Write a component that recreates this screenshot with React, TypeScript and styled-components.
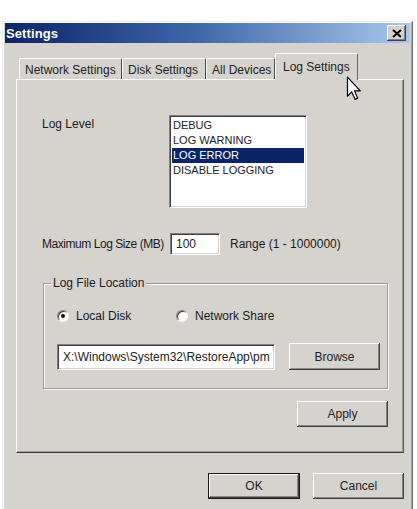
import styled, { createGlobalStyle } from 'styled-components';

const GlobalStyle = createGlobalStyle`
  html, body {
    margin: 0;
    padding: 0;
    background: #ffffff;
  }
  body {
    font-family: "Liberation Sans", Arial, sans-serif;
    font-size: 12px;
    color: #1a1a1a;
    overflow: hidden;
  }
`;

const Window = styled.div`
  position: relative;
  margin: 21px 0 0 2px;
  width: 411px;
  height: 500px;
  box-sizing: border-box;
  background: #d6d3ce;
  border-top: 1px solid #ecebe8;
  border-left: 1px solid #ecebe8;
  border-right: 1px solid #6e6c68;
  box-shadow: inset -1px 0 #a8a6a0, inset 1px 1px #ffffff;
  padding: 1px 2px 0 2px;
`;

const TitleBar = styled.div`
  height: 20px;
  display: flex;
  align-items: center;
  justify-content: space-between;
  padding: 0 4px 0 1px;
  background: linear-gradient(to right, #0b2468 0%, #3b64a6 45%, #a8c8ec 100%);
`;

const Title = styled.span`
  color: #ffffff;
  font-weight: bold;
  font-size: 13px;
  letter-spacing: 0.1px;
`;

const CloseButton = styled.button`
  width: 19px;
  height: 16px;
  padding: 0;
  display: flex;
  align-items: center;
  justify-content: center;
  background: #d6d3ce;
  border: none;
  box-shadow: inset -1px -1px #404040, inset 1px 1px #ffffff, inset -2px -2px #808080;
`;

const TabStrip = styled.div`
  display: flex;
  align-items: flex-end;
  margin-top: 10px;
  padding-left: 14px;
  height: 26px;
  position: relative;
  z-index: 1;
`;

const Tab = styled.div<{ $active?: boolean; $w: number }>`
  width: ${(p) => p.$w}px;
  height: ${(p) => (p.$active ? 27 : 21)}px;
  box-sizing: border-box;
  display: flex;
  align-items: ${(p) => (p.$active ? 'flex-start' : 'center')};
  padding: ${(p) => (p.$active ? '6px 0 0 7px' : '1px 0 0 5px')};
  margin: ${(p) => (p.$active ? '0 0 -1px 0' : '0')};
  background: #d6d3ce;
  border-top: 1px solid #ffffff;
  border-left: 1px solid #ffffff;
  border-right: 1px solid ${(p) => (p.$active ? '#6a6864' : '#4a4845')};
  border-radius: 2px 2px 0 0;
  font-size: 12px;
  color: #222;
  white-space: nowrap;
`;

const Panel = styled.div`
  margin-left: 11px;
  width: 388px;
  height: 374px;
  box-sizing: border-box;
  border-top: 1px solid #ffffff;
  border-left: 1px solid #ffffff;
  border-right: 1px solid #5a5854;
  border-bottom: 1px solid #3c3a38;
  box-shadow: inset -1px -1px #a09e98;
  padding: 35px 15px 0 25px;
`;

const Row = styled.div`
  display: flex;
  align-items: flex-start;
`;

const Label = styled.span<{ $w?: number; $tight?: boolean; $mt?: number }>`
  width: ${(p) => (p.$w ? `${p.$w}px` : 'auto')};
  flex: none;
  margin-top: ${(p) => p.$mt ?? 0}px;
  line-height: 14px;
  letter-spacing: ${(p) => (p.$tight ? '-0.45px' : 'normal')};
  white-space: nowrap;
`;

const ListBox = styled.div`
  width: 138px;
  height: 93px;
  box-sizing: border-box;
  background: #ffffff;
  border-top: 1px solid #808080;
  border-left: 1px solid #808080;
  border-right: 1px solid #ffffff;
  border-bottom: 1px solid #ffffff;
  box-shadow: inset 1px 1px #404040, inset -1px -1px #d6d3ce;
  padding: 1.5px 2px;
`;

const ListItem = styled.div<{ $selected?: boolean }>`
  height: 15px;
  line-height: 15px;
  font-size: 11px;
  padding-left: 1px;
  color: ${(p) => (p.$selected ? '#ffffff' : '#222')};
  background: ${(p) => (p.$selected ? '#0b2468' : 'transparent')};
  white-space: nowrap;
`;

const TextBox = styled.div<{ $w: number; $h: number }>`
  width: ${(p) => p.$w}px;
  height: ${(p) => p.$h}px;
  box-sizing: border-box;
  flex: none;
  display: flex;
  align-items: center;
  padding-left: 5px;
  background: #ffffff;
  border-top: 1px solid #808080;
  border-left: 1px solid #808080;
  border-right: 1px solid #ffffff;
  border-bottom: 1px solid #ffffff;
  box-shadow: inset 1px 1px #404040, inset -1px -1px #d6d3ce;
  white-space: nowrap;
  overflow: hidden;
  color: #222;
`;

const MaxRow = styled.div`
  display: flex;
  align-items: center;
  margin-top: 25px;
`;

const RangeText = styled.span`
  margin-left: 10px;
  white-space: nowrap;
`;

const Group = styled.fieldset`
  margin: 21px 0 0 1px;
  width: 345px;
  height: 113px;
  box-sizing: border-box;
  padding: 0 0 0 13px;
  border: 1px solid #9a9892;
  box-shadow: inset 1px 1px #ffffff, 1px 1px #ffffff;
`;

const Legend = styled.legend`
  margin-left: -6px;
  padding: 0 2px;
  font-size: 12px;
  line-height: 14px;
  background: #d6d3ce;
`;

const RadioRow = styled.div`
  display: flex;
  align-items: center;
  margin-top: 19px;
`;

const RadioOption = styled.label<{ $w: number }>`
  width: ${(p) => p.$w}px;
  display: flex;
  align-items: center;
  gap: 7px;
`;

const RadioDot = styled.span<{ $checked?: boolean }>`
  width: 12px;
  height: 12px;
  box-sizing: border-box;
  border-radius: 50%;
  background: #ffffff;
  border: 1px solid;
  border-color: #808080 #f4f4f4 #f4f4f4 #808080;
  box-shadow: inset 1px 1px #404040;
  display: flex;
  align-items: center;
  justify-content: center;
  &::after {
    content: '';
    width: 4px;
    height: 4px;
    border-radius: 50%;
    background: ${(p) => (p.$checked ? '#111' : 'transparent')};
  }
`;

const PathRow = styled.div`
  display: flex;
  align-items: center;
  gap: 14px;
  margin-top: 20px;
`;

const Button = styled.button<{ $w: number; $h: number; $default?: boolean }>`
  width: ${(p) => p.$w}px;
  height: ${(p) => p.$h}px;
  flex: none;
  padding: 0;
  font-family: "Liberation Sans", Arial, sans-serif;
  font-size: 12px;
  color: #222;
  background: #d6d3ce;
  border: ${(p) => (p.$default ? '1px solid #1a1a1a' : 'none')};
  box-shadow: inset -1px -1px #404040, inset 1px 1px #ffffff, inset -2px -2px #8a8884;
`;

const ApplyRow = styled.div`
  display: flex;
  justify-content: flex-end;
  margin-top: 12px;
  width: 346px;
`;

const Footer = styled.div`
  display: flex;
  justify-content: flex-end;
  gap: 13px;
  margin-top: 20px;
  padding-right: 6px;
`;

const Pointer = styled.svg`
  position: absolute;
  left: 343px;
  top: 54px;
  z-index: 5;
`;

export default function App() {
  return (
    <>
      <GlobalStyle />
      <Window>
        <TitleBar>
          <Title>Settings</Title>
          <CloseButton>
            <svg width="10" height="9" viewBox="0 0 10 9">
              <path d="M1 1 L9 8 M9 1 L1 8" stroke="#000" strokeWidth="2" />
            </svg>
          </CloseButton>
        </TitleBar>

        <TabStrip>
          <Tab $w={103}>Network Settings</Tab>
          <Tab $w={84}>Disk Settings</Tab>
          <Tab $w={69}>All Devices</Tab>
          <Tab $w={83} $active>Log Settings</Tab>
        </TabStrip>

        <Panel>
          <Row>
            <Label $w={127} $mt={2}>Log Level</Label>
            <ListBox>
              <ListItem>DEBUG</ListItem>
              <ListItem>LOG WARNING</ListItem>
              <ListItem $selected>LOG ERROR</ListItem>
              <ListItem>DISABLE LOGGING</ListItem>
            </ListBox>
          </Row>

          <MaxRow>
            <Label $w={128} $tight>Maximum Log Size (MB)</Label>
            <TextBox $w={50} $h={22}>100</TextBox>
            <RangeText>Range (1 - 1000000)</RangeText>
          </MaxRow>

          <Group>
            <Legend>Log File Location</Legend>
            <RadioRow>
              <RadioOption $w={119}>
                <RadioDot $checked />
                Local Disk
              </RadioOption>
              <RadioOption $w={140}>
                <RadioDot />
                Network Share
              </RadioOption>
            </RadioRow>
            <PathRow>
              <TextBox $w={218} $h={26}>X:\Windows\System32\RestoreApp\pm</TextBox>
              <Button $w={91} $h={27}>Browse</Button>
            </PathRow>
          </Group>

          <ApplyRow>
            <Button $w={91} $h={26}>Apply</Button>
          </ApplyRow>
        </Panel>

        <Footer>
          <Button $w={92} $h={26} $default>OK</Button>
          <Button $w={91} $h={26}>Cancel</Button>
        </Footer>

        <Pointer width="16" height="25" viewBox="0 0 13 21">
          <path
            d="M1 1 L1 17 L4.6 13.4 L7.4 19.6 L9.6 18.6 L6.9 12.5 L11.8 12.5 Z"
            fill="#ffffff"
            stroke="#000"
            strokeWidth="1"
            strokeLinejoin="round"
          />
        </Pointer>
      </Window>
    </>
  );
}
